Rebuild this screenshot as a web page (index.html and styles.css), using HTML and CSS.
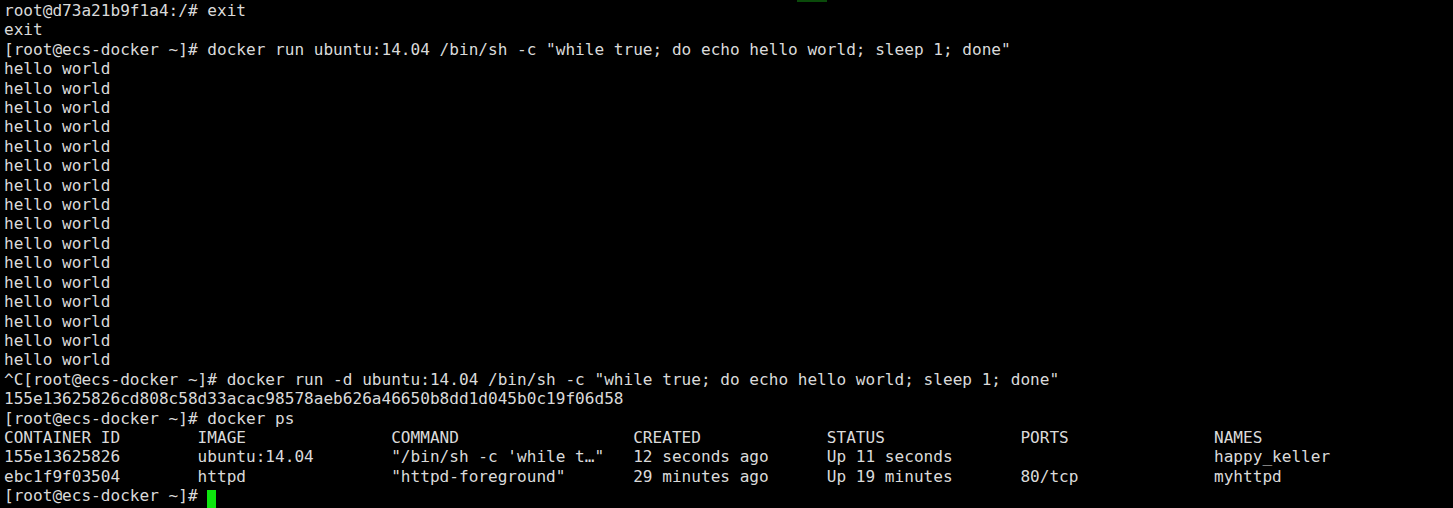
FILE: index.html
```html
<!DOCTYPE html>
<html>
<head>
<meta charset="utf-8">
<link rel="stylesheet" href="styles.css">
</head>
<body>
<div class="term">
<div class="ghost"></div>
<pre class="out">root@d73a21b9f1a4:/# exit
exit
[root@ecs-docker ~]# docker run ubuntu:14.04 /bin/sh -c "while true; do echo hello world; sleep 1; done"
hello world
hello world
hello world
hello world
hello world
hello world
hello world
hello world
hello world
hello world
hello world
hello world
hello world
hello world
hello world
hello world
^C[root@ecs-docker ~]# docker run -d ubuntu:14.04 /bin/sh -c "while true; do echo hello world; sleep 1; done"
155e13625826cd808c58d33acac98578aeb626a46650b8dd1d045b0c19f06d58
[root@ecs-docker ~]# docker ps
CONTAINER ID        IMAGE               COMMAND                  CREATED             STATUS              PORTS               NAMES
155e13625826        ubuntu:14.04        "/bin/sh -c 'while t…"   12 seconds ago      Up 11 seconds                           happy_keller
ebc1f9f03504        httpd               "httpd-foreground"       29 minutes ago      Up 19 minutes       80/tcp              myhttpd
[root@ecs-docker ~]# <span class="cursor"> </span></pre>
</div>
</body>
</html>
```
FILE: styles.css
```css
html, body {
  margin: 0;
  padding: 0;
  background: #000;
}
.term {
  position: relative;
  width: 1453px;
  height: 508px;
  overflow: hidden;
  background: #000;
}
.ghost {
  position: absolute;
  left: 797px;
  top: 0;
  width: 30px;
  height: 2px;
  background: #0a4a0a;
}
.out {
  margin: 0;
  padding: 1px 0 0 4px;
  font-family: "DejaVu Sans Mono", monospace;
  font-size: 16.08px;
  line-height: 19.4px;
  color: #dadada;
  white-space: pre;
}
.cursor {
  display: inline-block;
  width: 9px;
  height: 18px;
  vertical-align: -4px;
  background: #0ee60e;
}
```
